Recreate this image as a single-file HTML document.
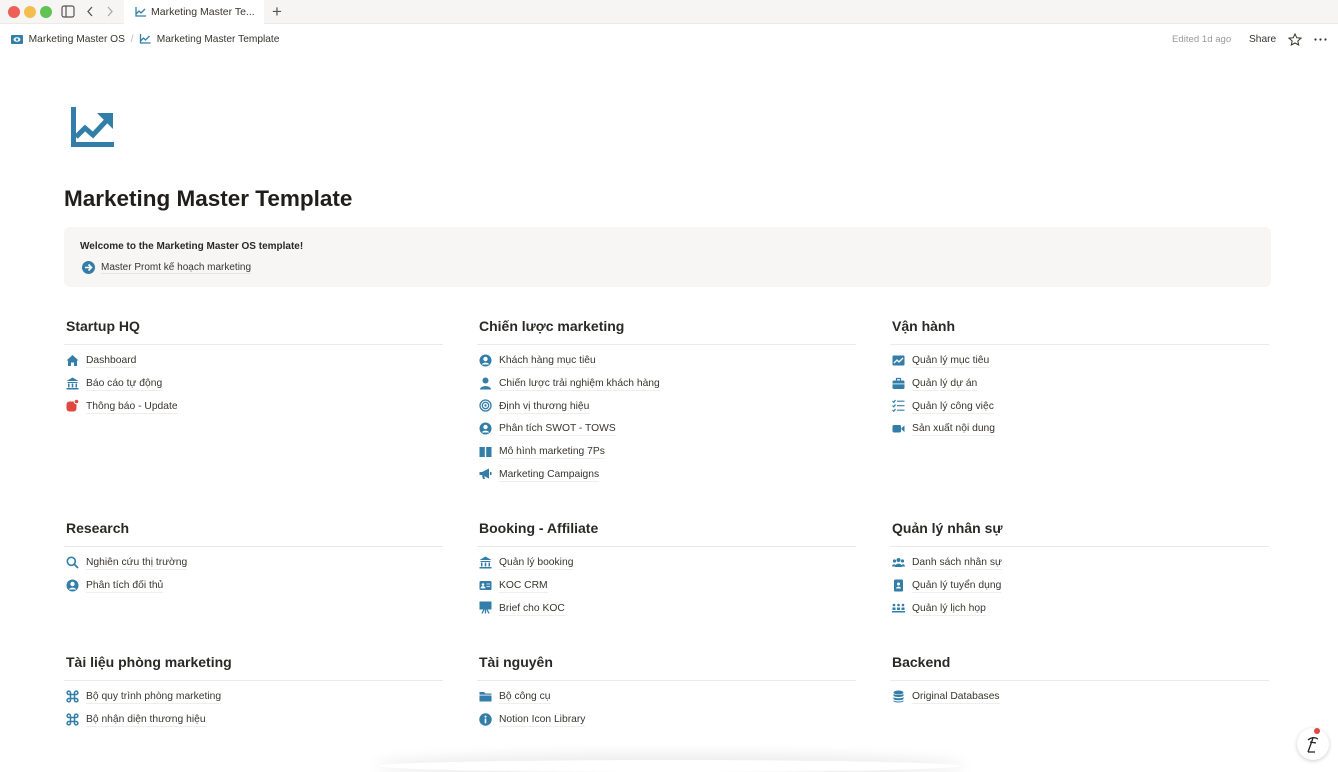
<!DOCTYPE html>
<html><head><meta charset="utf-8">
<style>
*{box-sizing:border-box;margin:0;padding:0}
body{width:1338px;height:768px;overflow:hidden;background:#fff;font-family:"Liberation Sans","Noto Sans CJK SC",sans-serif;color:#37352f;position:relative}
.tabbar{position:absolute;left:0;top:0;width:1338px;height:24px;background:#f6f5f4;border-bottom:1px solid #ebeae8}
.dot{position:absolute;top:6px;width:12px;height:12px;border-radius:50%}
.tab{position:absolute;left:124px;top:0;width:140px;height:24px;background:#fff;font-size:10.5px;color:#37352f;padding:6px 0 0 27px}
.crumb{position:absolute;top:34px;font-size:10.2px;color:#37352f}
.ico{display:inline-block;vertical-align:middle}
h1{position:absolute;left:64px;top:186px;font-size:22.5px;font-weight:bold;color:#1f1e1b}
.callout{position:absolute;left:64px;top:227px;width:1207px;height:60px;background:#f7f6f4;border-radius:6px;font-size:10px}
.col{position:absolute;width:379px}
.col h2{font-size:14px;font-weight:bold;color:#2a2926;height:18px;padding-left:2px}
.col hr{border:0;border-top:1px solid #ebeae8;margin:8px 0 5px 0}
.it{height:22.7px;font-size:10.3px;display:flex;align-items:center;padding-left:2px}
.it svg{width:13px;height:13px;margin-right:7px;flex:none;position:relative;top:-1px}
.it span{border-bottom:1px solid #efeeec;line-height:13px}
</style></head><body>
<div class="tabbar">
 <div class="dot" style="left:8px;background:#ee5f57"></div>
 <div class="dot" style="left:24px;background:#f4be4f"></div>
 <div class="dot" style="left:40px;background:#5fc454"></div>
 <svg style="position:absolute;left:61px;top:5px" width="14" height="13" viewBox="0 0 14 13"><rect x="1" y="1" width="12" height="11" rx="2" fill="none" stroke="#555" stroke-width="1.2"/><line x1="5" y1="1" x2="5" y2="12" stroke="#555" stroke-width="1.2"/></svg>
 <svg style="position:absolute;left:86px;top:5px" width="8" height="13"><path d="M6 2L2 6.5L6 11" fill="none" stroke="#555" stroke-width="1.3"/></svg>
 <svg style="position:absolute;left:106px;top:5px" width="8" height="13"><path d="M2 2L6 6.5L2 11" fill="none" stroke="#aaa" stroke-width="1.3"/></svg>
 <div class="tab"><svg style="position:absolute;left:11px;top:7px" width="11" height="10" viewBox="0 0 11 10"><path d="M1 0V9H11M1 7L4 4L6 6L10 2" fill="none" stroke="#337ea9" stroke-width="1.3"/></svg>Marketing Master Te...</div>
 <div style="position:absolute;left:272px;top:2px;font-size:17px;color:#555">+</div>
</div>
<div class="crumb" style="left:11px"><svg class="ico" width="12" height="9" viewBox="0 0 12 9"><rect width="12" height="9" rx="1" fill="#337ea9"/><ellipse cx="6" cy="4.5" rx="3.5" ry="2.3" fill="#fff"/><circle cx="6" cy="4.5" r="1.3" fill="#337ea9"/></svg>&nbsp; Marketing Master OS <span style="color:#bbb">&nbsp;/&nbsp;</span> <svg class="ico" width="12" height="10" viewBox="0 0 11 10"><path d="M1 0V9H11M1 7L4 4L6 6L10 2" fill="none" stroke="#337ea9" stroke-width="1.3"/></svg>&nbsp; Marketing Master Template</div>
<div class="crumb" style="left:1172px;color:#9b9a97;font-size:9.6px">Edited 1d ago</div>
<div class="crumb" style="left:1249px">Share</div>
<svg style="position:absolute;left:1288px;top:33px" width="14" height="13" viewBox="0 0 14 13"><path d="M7 1L8.8 4.8L13 5.2L9.8 8L10.7 12L7 10L3.3 12L4.2 8L1 5.2L5.2 4.8Z" fill="none" stroke="#37352f" stroke-width="1"/></svg>
<svg style="position:absolute;left:1314px;top:38px" width="14" height="3"><circle cx="1.5" cy="1.5" r="1.1" fill="#37352f"/><circle cx="6.5" cy="1.5" r="1.1" fill="#37352f"/><circle cx="11.5" cy="1.5" r="1.1" fill="#37352f"/></svg>

<svg style="position:absolute;left:71px;top:107px" width="43" height="40" viewBox="0 0 43 40"><path d="M2.5 0V37.5H43" fill="none" stroke="#337ea9" stroke-width="5"/><path d="M5 30L14 21L22 28L36 13" fill="none" stroke="#337ea9" stroke-width="5"/><path d="M26 6H42V22Z" fill="#337ea9"/></svg>
<h1>Marketing Master Template</h1>
<div class="callout">
 <div style="position:absolute;left:16px;top:14px;font-weight:bold;color:#2a2926">Welcome to the Marketing Master OS template!</div>
 <div style="position:absolute;left:18px;top:34px;display:flex;align-items:center"><svg width="13" height="13" viewBox="0 0 13 13"><circle cx="6.5" cy="6.5" r="6.5" fill="#337ea9"/><path d="M3 6.5H9M6.5 3.5L9.5 6.5L6.5 9.5" fill="none" stroke="#fff" stroke-width="1.6"/></svg><span style="margin-left:6px;border-bottom:1px solid #e6e5e2">Master Promt kế hoạch marketing</span></div>
</div>

<svg width="0" height="0" style="position:absolute">
<defs>
<symbol id="home" viewBox="0 0 13 13"><path d="M6.5 1L12.5 6.5H11V12H8V8.5H5V12H2V6.5H0.5Z" fill="#337ea9"/></symbol>
<symbol id="bank" viewBox="0 0 13 13"><path d="M6.5 0.5L12.5 4H0.5Z M1.5 5H11.5V6H1.5Z M2 6.5H3.5V10.5H2Z M5.7 6.5H7.3V10.5H5.7Z M9.5 6.5H11V10.5H9.5Z M0.5 11H12.5V12.5H0.5Z" fill="#337ea9"/></symbol>
<symbol id="bell" viewBox="0 0 13 13"><rect x="0.5" y="2.5" width="10" height="10" rx="3" fill="#e0473e"/><circle cx="10.5" cy="2.5" r="2.3" fill="#e0473e" stroke="#fff"/></symbol>
<symbol id="user" viewBox="0 0 13 13"><circle cx="6.5" cy="6.5" r="6" fill="#337ea9"/><circle cx="6.5" cy="5" r="2.2" fill="#fff"/><path d="M2.8 10.5C4 8 9 8 10.2 10.5" fill="#fff"/></symbol>
<symbol id="person" viewBox="0 0 13 13"><circle cx="6.5" cy="3.5" r="3" fill="#337ea9"/><path d="M1 12.5C1 8 12 8 12 12.5Z" fill="#337ea9"/></symbol>
<symbol id="target" viewBox="0 0 13 13"><circle cx="6.5" cy="6.5" r="5.5" fill="none" stroke="#337ea9" stroke-width="1.3"/><circle cx="6.5" cy="6.5" r="3.2" fill="none" stroke="#337ea9" stroke-width="1.3"/><circle cx="6.5" cy="6.5" r="1.2" fill="#337ea9"/></symbol>
<symbol id="book" viewBox="0 0 13 13"><path d="M0.5 2H5.8V12H0.5Z M7.2 2H12.5V12H7.2Z" fill="#337ea9"/></symbol>
<symbol id="mega" viewBox="0 0 13 13"><path d="M0.5 5H3L10 1.5V11.5L3 8H0.5Z M3 8.5H5L6 12H4Z M11 5H12.5V8H11Z" fill="#337ea9"/></symbol>
<symbol id="chart" viewBox="0 0 13 13"><rect x="0.5" y="1.5" width="12" height="10" rx="1" fill="#337ea9"/><path d="M2 9L5 6L7 8L11 4" fill="none" stroke="#fff" stroke-width="1.3"/></symbol>
<symbol id="brief" viewBox="0 0 13 13"><rect x="0.5" y="3.5" width="12" height="8.5" rx="1.5" fill="#337ea9"/><path d="M4.5 3.5V1.5H8.5V3.5" fill="none" stroke="#337ea9" stroke-width="1.2"/><rect x="0.5" y="6.5" width="12" height="0.8" fill="#fff"/></symbol>
<symbol id="list" viewBox="0 0 13 13"><path d="M0.5 2L1.8 3.3L3.5 1M0.5 6.5L1.8 7.8L3.5 5.5M0.5 11L1.8 12.3L3.5 10M5 2.2H12.5M5 6.7H12.5M5 11.2H12.5" fill="none" stroke="#337ea9" stroke-width="1.2"/></symbol>
<symbol id="video" viewBox="0 0 13 13"><rect x="0.5" y="3" width="8.5" height="7.5" rx="1.5" fill="#337ea9"/><path d="M9.5 6L12.5 3.5V10L9.5 7.5Z" fill="#337ea9"/></symbol>
<symbol id="search" viewBox="0 0 13 13"><circle cx="5.3" cy="5.3" r="4" fill="none" stroke="#337ea9" stroke-width="1.6"/><path d="M8.3 8.3L12 12" stroke="#337ea9" stroke-width="1.8"/></symbol>
<symbol id="card" viewBox="0 0 13 13"><rect x="0.5" y="2" width="12" height="9" rx="1.3" fill="#337ea9"/><circle cx="4" cy="5.5" r="1.3" fill="#fff"/><path d="M2 9C2.5 7 5.5 7 6 9Z M7.5 5H11M7.5 7.5H11" fill="#fff" stroke="#fff" stroke-width="0.8"/></symbol>
<symbol id="easel" viewBox="0 0 13 13"><rect x="0.5" y="0.5" width="12" height="8" fill="#337ea9"/><path d="M6.5 8.5V12.5M3 12.5L5 8.5M10 12.5L8 8.5" stroke="#337ea9" stroke-width="1.3"/></symbol>
<symbol id="people" viewBox="0 0 13 13"><circle cx="6.5" cy="4" r="2" fill="#337ea9"/><circle cx="2.5" cy="5" r="1.6" fill="#337ea9"/><circle cx="10.5" cy="5" r="1.6" fill="#337ea9"/><path d="M3 11C3 6.5 10 6.5 10 11Z M0 10.5C0 7.5 4 7.5 4 10.5Z M9 10.5C9 7.5 13 7.5 13 10.5Z" fill="#337ea9"/></symbol>
<symbol id="badge" viewBox="0 0 13 13"><rect x="2" y="0.5" width="9" height="12" rx="1.3" fill="#337ea9"/><circle cx="6.5" cy="5" r="1.5" fill="#fff"/><path d="M4 9.5C4.5 7 8.5 7 9 9.5Z" fill="#fff"/></symbol>
<symbol id="meet" viewBox="0 0 13 13"><circle cx="2" cy="4" r="1.3" fill="#337ea9"/><circle cx="6.5" cy="4" r="1.3" fill="#337ea9"/><circle cx="11" cy="4" r="1.3" fill="#337ea9"/><path d="M0.5 9V6.5H3.5V9M5 9V6.5H8V9M9.5 9V6.5H12.5V9M0 10H13V11.5H0Z" fill="#337ea9"/></symbol>
<symbol id="cmd" viewBox="0 0 13 13"><path d="M4.5 4.5H8.5V8.5H4.5Z M4.5 4.5V3A1.7 1.7 0 1 0 3 4.5H4.5 M8.5 4.5V3A1.7 1.7 0 1 1 10 4.5H8.5 M4.5 8.5V10A1.7 1.7 0 1 1 3 8.5H4.5 M8.5 8.5V10A1.7 1.7 0 1 0 10 8.5H8.5" fill="none" stroke="#337ea9" stroke-width="1.5"/></symbol>
<symbol id="folder" viewBox="0 0 13 13"><path d="M0.5 2H5L6.5 3.5H12.5V11.5H0.5Z" fill="#337ea9"/><rect x="0.5" y="4.7" width="12" height="0.8" fill="#fff"/></symbol>
<symbol id="info" viewBox="0 0 13 13"><circle cx="6.5" cy="6.5" r="6.2" fill="#337ea9"/><circle cx="6.5" cy="3.6" r="1" fill="#fff"/><rect x="5.7" y="5.5" width="1.6" height="4.8" fill="#fff"/></symbol>
<symbol id="db" viewBox="0 0 13 13"><ellipse cx="6.5" cy="2.5" rx="5" ry="2" fill="#337ea9"/><path d="M1.5 3.5V5.5C1.5 7.5 11.5 7.5 11.5 5.5V3.5C11.5 5.5 1.5 5.5 1.5 3.5Z M1.5 6.8V8.8C1.5 10.8 11.5 10.8 11.5 8.8V6.8C11.5 8.8 1.5 8.8 1.5 6.8Z M1.5 10V11C1.5 13 11.5 13 11.5 11V10C11.5 12 1.5 12 1.5 10Z" fill="#337ea9"/></symbol>
</defs></svg>

<div class="col" style="left:64px;top:318px"><h2>Startup HQ</h2><hr>
<div class="it"><svg><use href="#home"/></svg><span>Dashboard</span></div>
<div class="it"><svg><use href="#bank"/></svg><span>Báo cáo tự động</span></div>
<div class="it"><svg><use href="#bell"/></svg><span>Thông báo - Update</span></div></div>

<div class="col" style="left:477px;top:318px"><h2>Chiến lược marketing</h2><hr>
<div class="it"><svg><use href="#user"/></svg><span>Khách hàng mục tiêu</span></div>
<div class="it"><svg><use href="#person"/></svg><span>Chiến lược trải nghiệm khách hàng</span></div>
<div class="it"><svg><use href="#target"/></svg><span>Định vị thương hiệu</span></div>
<div class="it"><svg><use href="#user"/></svg><span>Phân tích SWOT - TOWS</span></div>
<div class="it"><svg><use href="#book"/></svg><span>Mô hình marketing 7Ps</span></div>
<div class="it"><svg><use href="#mega"/></svg><span>Marketing Campaigns</span></div></div>

<div class="col" style="left:890px;top:318px"><h2>Vận hành</h2><hr>
<div class="it"><svg><use href="#chart"/></svg><span>Quản lý mục tiêu</span></div>
<div class="it"><svg><use href="#brief"/></svg><span>Quản lý dự án</span></div>
<div class="it"><svg><use href="#list"/></svg><span>Quản lý công việc</span></div>
<div class="it"><svg><use href="#video"/></svg><span>Sản xuất nội dung</span></div></div>

<div class="col" style="left:64px;top:520px"><h2>Research</h2><hr>
<div class="it"><svg><use href="#search"/></svg><span>Nghiên cứu thị trường</span></div>
<div class="it"><svg><use href="#user"/></svg><span>Phân tích đối thủ</span></div></div>

<div class="col" style="left:477px;top:520px"><h2>Booking - Affiliate</h2><hr>
<div class="it"><svg><use href="#bank"/></svg><span>Quản lý booking</span></div>
<div class="it"><svg><use href="#card"/></svg><span>KOC CRM</span></div>
<div class="it"><svg><use href="#easel"/></svg><span>Brief cho KOC</span></div></div>

<div class="col" style="left:890px;top:520px"><h2>Quản lý nhân sự</h2><hr>
<div class="it"><svg><use href="#people"/></svg><span>Danh sách nhân sự</span></div>
<div class="it"><svg><use href="#badge"/></svg><span>Quản lý tuyển dụng</span></div>
<div class="it"><svg><use href="#meet"/></svg><span>Quản lý lịch họp</span></div></div>

<div class="col" style="left:64px;top:654px"><h2>Tài liệu phòng marketing</h2><hr>
<div class="it"><svg><use href="#cmd"/></svg><span>Bộ quy trình phòng marketing</span></div>
<div class="it"><svg><use href="#cmd"/></svg><span>Bộ nhận diện thương hiệu</span></div></div>

<div class="col" style="left:477px;top:654px"><h2>Tài nguyên</h2><hr>
<div class="it"><svg><use href="#folder"/></svg><span>Bộ công cụ</span></div>
<div class="it"><svg><use href="#info"/></svg><span>Notion Icon Library</span></div></div>

<div class="col" style="left:890px;top:654px"><h2>Backend</h2><hr>
<div class="it"><svg><use href="#db"/></svg><span>Original Databases</span></div></div>

<div style="position:absolute;left:1297px;top:728px;width:32px;height:32px;border-radius:50%;background:#fff;box-shadow:0 1px 4px rgba(0,0,0,.2)">
 <svg width="32" height="32" viewBox="0 0 32 32"><circle cx="20" cy="3" r="3" fill="#e0473e"/><path d="M11 12Q16 8 21 11M16 10L11 24M11 24H18M13 14L19 15" fill="none" stroke="#222" stroke-width="1.3"/></svg>
</div>
<div style="position:absolute;left:380px;top:760px;width:580px;height:12px;border-radius:50%;box-shadow:0 0 14px 6px rgba(0,0,0,.08)"></div>
</body></html>
